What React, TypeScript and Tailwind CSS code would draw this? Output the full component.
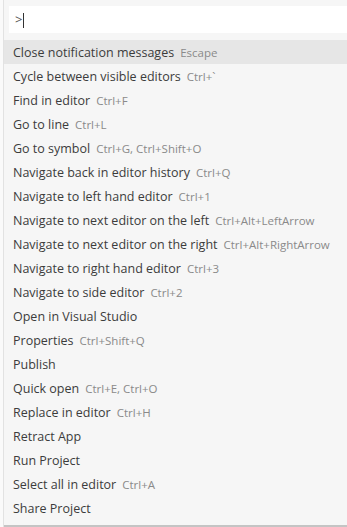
import React from "react";

const items: [string, string][] = [
  ["Close notification messages", "Escape"],
  ["Cycle between visible editors", "Ctrl+`"],
  ["Find in editor", "Ctrl+F"],
  ["Go to line", "Ctrl+L"],
  ["Go to symbol", "Ctrl+G, Ctrl+Shift+O"],
  ["Navigate back in editor history", "Ctrl+Q"],
  ["Navigate to left hand editor", "Ctrl+1"],
  ["Navigate to next editor on the left", "Ctrl+Alt+LeftArrow"],
  ["Navigate to next editor on the right", "Ctrl+Alt+RightArrow"],
  ["Navigate to right hand editor", "Ctrl+3"],
  ["Navigate to side editor", "Ctrl+2"],
  ["Open in Visual Studio", ""],
  ["Properties", "Ctrl+Shift+Q"],
  ["Publish", ""],
  ["Quick open", "Ctrl+E, Ctrl+O"],
  ["Replace in editor", "Ctrl+H"],
  ["Retract App", ""],
  ["Run Project", ""],
  ["Select all in editor", "Ctrl+A"],
  ["Share Project", ""],
];

export default function App() {
  return (
    <div className="w-[347px] h-[527px] overflow-hidden flex bg-white" style={{ fontFamily: '"Open Sans", "Noto Sans", sans-serif' }}>
      <div className="w-[4px] shrink-0 bg-[#fafafa] border-r border-[#e2e2e2]" />
      <div className="flex-1 flex flex-col bg-[#f6f6f6] border-b-[2px] border-[#c4c4c4]">
        <div className="pt-[6px] pl-[5px] pb-[7px]">
          <div className="h-[27px] bg-white flex items-center pl-[6px] pt-px text-[13px] text-[#555]">
            <span>&gt;</span>
            <span className="w-px h-[15px] bg-[#333] ml-[1px]" />
          </div>
        </div>
        <div className="flex flex-col">
          {items.map(([label, key], i) => (
            <div
              key={label}
              className={`h-[24px] flex items-center pl-[9px] pt-[2px] whitespace-nowrap ${i === 0 ? "bg-[#e6e6e6]" : ""}`}
            >
              <span className="text-[12.5px] text-[#3c3c3c]">{label}</span>
              {key && <span className="ml-[6px] text-[11.5px] text-[#8a8a8a]">{key}</span>}
            </div>
          ))}
        </div>
      </div>
    </div>
  );
}
